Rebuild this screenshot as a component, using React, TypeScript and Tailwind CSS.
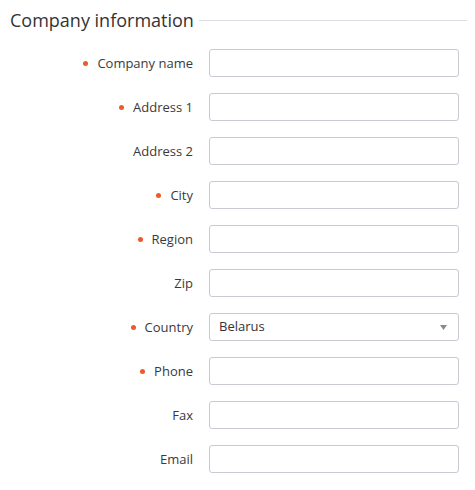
import { useState } from "react";

type Field = {
  label: string;
  required: boolean;
  select?: boolean;
};

const fields: Field[] = [
  { label: "Company name", required: true },
  { label: "Address 1", required: true },
  { label: "Address 2", required: false },
  { label: "City", required: true },
  { label: "Region", required: true },
  { label: "Zip", required: false },
  { label: "Country", required: true, select: true },
  { label: "Phone", required: true },
  { label: "Fax", required: false },
  { label: "Email", required: false },
];

export default function App() {
  const [country, setCountry] = useState("Belarus");

  return (
    <div className="min-h-[490px] bg-white font-['Open_Sans',sans-serif] text-[#3a3a3a]">
      <div className="flex items-center pl-[10px] pr-[8px] pt-[6px]">
        <h2 className="text-[18px] leading-[28px] text-[#333]">Company information</h2>
        <div className="ml-[5px] h-px flex-1 bg-[#dcdee4]" />
      </div>

      <div className="mt-[15px] flex flex-col gap-[16px]">
        {fields.map((f) => (
          <div key={f.label} className="flex items-center">
            <label className="flex w-[193px] items-center justify-end gap-[9px] pt-px text-[13px]">
              {f.required && <span className="h-[5px] w-[5px] rounded-full bg-[#ec5b2d]" />}
              {f.label}
            </label>
            {f.select ? (
              <div className="relative ml-[16px] h-[28px] w-[250px]">
                <select
                  value={country}
                  onChange={(e) => setCountry(e.target.value)}
                  className="h-full w-full appearance-none rounded-[3px] border border-[#c8cad1] bg-white pl-[9px] text-[13px] text-[#333] outline-none"
                >
                  <option>Belarus</option>
                  <option>Poland</option>
                  <option>Lithuania</option>
                </select>
                <svg
                  className="pointer-events-none absolute right-[12px] top-[12px]"
                  width="7"
                  height="5"
                  viewBox="0 0 7 5"
                >
                  <path d="M0 0h7L3.5 5z" fill="#8a8a8a" />
                </svg>
              </div>
            ) : (
              <input
                type="text"
                className="ml-[16px] h-[28px] w-[250px] rounded-[3px] border border-[#c8cad1] bg-white px-[9px] text-[13px] outline-none"
              />
            )}
          </div>
        ))}
      </div>
    </div>
  );
}
